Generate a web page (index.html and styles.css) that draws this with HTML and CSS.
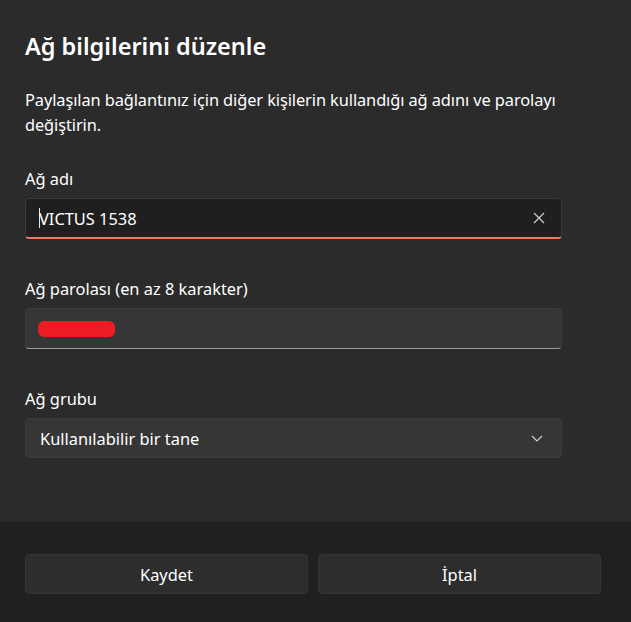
FILE: index.html
```html
<!DOCTYPE html>
<html lang="tr">
<head>
<meta charset="utf-8">
<title>Ağ bilgilerini düzenle</title>
<link rel="stylesheet" href="styles.css">
</head>
<body>
<div class="dialog">
  <div class="content">
    <h1 class="title">Ağ bilgilerini düzenle</h1>
    <p class="desc">Paylaşılan bağlantınız için diğer kişilerin kullandığı ağ adını ve parolayı değiştirin.</p>

    <div class="field field-first">
      <div class="label">Ağ adı</div>
      <div class="input input-focus">
        <span class="caret"></span>
        <span class="value">VICTUS 1538</span>
        <svg class="clear" width="12" height="12" viewBox="0 0 12 12"><path d="M1 1L11 11M11 1L1 11" stroke="#cfcfcf" stroke-width="1.2" fill="none"/></svg>
      </div>
    </div>

    <div class="field">
      <div class="label">Ağ parolası (en az 8 karakter)</div>
      <div class="input input-rest">
        <span class="redact"></span>
      </div>
    </div>

    <div class="field">
      <div class="label">Ağ grubu</div>
      <div class="select">
        <span class="value">Kullanılabilir bir tane</span>
        <svg class="chev" width="12" height="7" viewBox="0 0 12 7"><path d="M1 1L6 6L11 1" stroke="#d0d0d0" stroke-width="1.2" fill="none"/></svg>
      </div>
    </div>
  </div>
  <div class="footer">
    <button class="btn">Kaydet</button>
    <button class="btn">İptal</button>
  </div>
</div>
</body>
</html>
```

FILE: styles.css
```css
html, body {
  margin: 0;
  padding: 0;
  height: 100%;
}
body {
  background: #2b2b2b;
  color: #ffffff;
  font-family: "Noto Sans", "Open Sans", sans-serif;
  font-size: 16.4px;
}
.dialog {
  display: flex;
  flex-direction: column;
  height: 622px;
}
.content {
  flex: 1;
  padding: 30px 69px 0 25px;
}
.title {
  margin: 0;
  font-size: 23.5px;
  font-weight: 600;
  line-height: 32px;
}
.desc {
  margin: 25px -24px 0 0;
  line-height: 25px;
  letter-spacing: -0.1px;
}
.field {
  margin-top: 37px;
}
.field-first {
  margin-top: 29px;
}
.label {
  line-height: 25px;
  margin-bottom: 7px;
}
.input, .select {
  box-sizing: border-box;
  height: 41px;
  width: 537px;
  border-radius: 4px;
  display: flex;
  align-items: center;
  position: relative;
}
.input-focus {
  background: #1f1f1f;
  border: 1px solid #3a3a3a;
  border-bottom: 2px solid #ef7a62;
  padding: 0 16px 0 13px;
}
.caret {
  width: 1px;
  height: 20px;
  background: #e8e8e8;
  margin-right: -1px;
}
.value {
  flex: 1;
}
.clear {
  flex: none;
}
.input-rest {
  background: #363636;
  border: 1px solid #3c3c3c;
  border-bottom: 1px solid #9c9c9c;
  padding: 0 12px;
}
.redact {
  width: 77px;
  height: 16px;
  background: #ed1c24;
  border-radius: 6px;
}
.select {
  background: #363636;
  border: 1px solid #3c3c3c;
  height: 40px;
  padding: 0 18px 0 14px;
}
.chev {
  flex: none;
}
.footer {
  flex: none;
  height: 100px;
  background: #202020;
  box-sizing: border-box;
  padding: 32px 30px 0 25px;
  display: flex;
  gap: 10px;
  align-items: flex-start;
}
.btn {
  flex: 1;
  height: 40px;
  background: #2d2d2d;
  border: 1px solid #353535;
  border-radius: 4px;
  color: #ffffff;
  font-family: inherit;
  font-size: 16.4px;
}
```
